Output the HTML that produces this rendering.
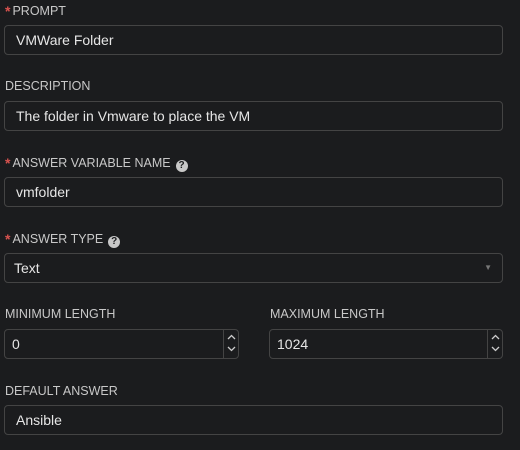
<!DOCTYPE html>
<html><head><style>
body{margin:0;width:520px;height:450px;background:#1b1c1e;font-family:"Liberation Sans",sans-serif;overflow:hidden;position:relative}
.l{position:absolute;left:5px;font-size:12.5px;color:#c8c8c8;letter-spacing:0}
.l b{color:#d9534f;font-weight:bold;margin-right:2px;font-size:14px;vertical-align:-1px}
.q{display:inline-block;width:12px;height:12px;border-radius:50%;background:#c8c8c8;color:#1b1c1e;font-size:10px;font-weight:bold;text-align:center;line-height:12px;margin-left:5px;vertical-align:-1px}
.i{position:absolute;left:4px;width:497px;height:28px;border:1px solid #444;border-radius:4px;box-sizing:content-box;color:#e6e6e6;font-size:14px;line-height:28px;text-indent:11px}
.sp{position:absolute;right:0;top:0;width:15px;height:28px;border-left:1px solid #444;color:#ccc;font-size:9px;text-indent:0;text-align:center;line-height:12px;padding-top:2px;box-sizing:border-box}
</style></head><body>
<div class="l" style="top:3px"><b>*</b>PROMPT</div>
<div class="i" style="top:25px">VMWare Folder</div>
<div class="l" style="top:79px">DESCRIPTION</div>
<div class="i" style="top:101px">The folder in Vmware to place the VM</div>
<div class="l" style="top:155px"><b>*</b>ANSWER VARIABLE NAME<span class="q">?</span></div>
<div class="i" style="top:177px">vmfolder</div>
<div class="l" style="top:231px"><b>*</b>ANSWER TYPE<span class="q">?</span></div>
<div class="i" style="top:253px;text-indent:9px">Text<span style="position:absolute;right:10px;top:0;font-size:8px;color:#777">&#9660;</span></div>
<div class="l" style="top:307px">MINIMUM LENGTH</div>
<div class="l" style="top:307px;left:270px">MAXIMUM LENGTH</div>
<div class="i" style="top:329px;width:233px;text-indent:7px">0<div class="sp"><svg width="9" height="22" viewBox="0 0 9 22"><path d="M1 7L4.5 3.5L8 7M1 15L4.5 18.5L8 15" stroke="#ccc" stroke-width="1.3" fill="none"/></svg></div></div>
<div class="i" style="top:329px;left:269px;width:232px;text-indent:7px">1024<div class="sp"><svg width="9" height="22" viewBox="0 0 9 22"><path d="M1 7L4.5 3.5L8 7M1 15L4.5 18.5L8 15" stroke="#ccc" stroke-width="1.3" fill="none"/></svg></div></div>
<div class="l" style="top:384px">DEFAULT ANSWER</div>
<div class="i" style="top:405px">Ansible</div>
</body></html>
